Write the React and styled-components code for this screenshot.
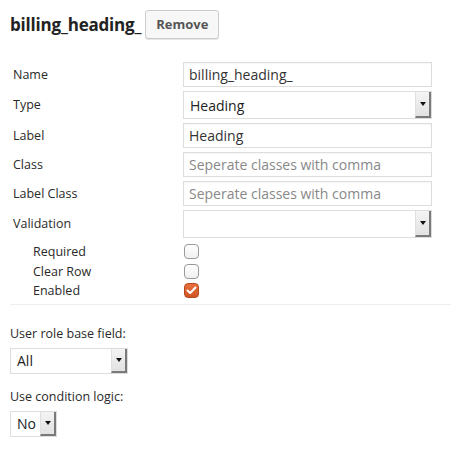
import React from "react"
import styled, {createGlobalStyle} from "styled-components"

const GlobalStyle = createGlobalStyle`
    body {
        margin: 0;
        background: #fff;
        font-family: "Open Sans", "Noto Sans", sans-serif;
        color: #333;
    }
`

const Wrapper = styled.div`
    padding: 9px 0 0 10px;
`

const Header = styled.div`
    display: flex;
    align-items: center;
    gap: 4px;
    height: 30px;
`

const Title = styled.h3`
    margin: 0;
    font-size: 17px;
    font-weight: 700;
    color: #222;
    letter-spacing: -0.2px;
`

const Button = styled.button`
    height: 29px;
    padding: 0 10px;
    border: 1px solid #ccc;
    border-radius: 3px;
    background: #f7f7f7;
    box-shadow: 0 1px 0 #e6e6e6;
    font-family: inherit;
    font-size: 13px;
    font-weight: 700;
    color: #555;
`

const Fields = styled.div`
    display: grid;
    grid-template-columns: 173px 249px;
    row-gap: 4px;
    margin-top: 23px;
    align-items: center;
`

const Label = styled.div`
    padding-left: ${props => props.$indent ? 23 : 3}px;
    font-size: 12.5px;
    color: #2a2a2a;
    line-height: 19.5px;
`

const Input = styled.div`
    box-sizing: border-box;
    height: 25px;
    border: 1px solid #ddd;
    padding: 0 5px;
    display: flex;
    align-items: center;
    font-size: 14px;
    color: ${props => props.$placeholder ? "#888" : "#333"};
    box-shadow: inset 0 1px 2px rgba(0, 0, 0, 0.04);
`

const SelectBox = styled.div`
    box-sizing: border-box;
    display: flex;
    align-items: stretch;
    width: ${props => props.$width || "100%"};
    height: ${props => props.$height || 28}px;
    border: 1px solid #ddd;
    background: #fff;
    font-size: 14px;
    color: #222;
`

const SelectText = styled.div`
    flex: 1;
    display: flex;
    align-items: center;
    padding-left: 6px;
`

const Arrow = styled.div`
    width: 13px;
    display: flex;
    align-items: center;
    justify-content: center;
    background: linear-gradient(#f4f4f4, #e2e2e2);
    border-left: 1px solid #e0e0e0;
    border-right: 2px solid #7a7a7a;
    border-bottom: 2px solid #7a7a7a;
    &::after {
        content: "";
        border-left: 3px solid transparent;
        border-right: 3px solid transparent;
        border-top: 4px solid #111;
    }
`

const Checks = styled.div`
    display: grid;
    grid-template-columns: 174px 1fr;
    grid-auto-rows: 19.5px;
    margin-top: 4px;
    align-items: center;
`

const Box = styled.span`
    box-sizing: border-box;
    width: 15px;
    height: 15px;
    border-radius: 4px;
    border: 1px solid ${props => props.$checked ? "#b5481c" : "#999"};
    background: ${props => props.$checked ? "linear-gradient(#e8703e, #cf5525)" : "linear-gradient(#fff, #f0f0f0)"};
    display: flex;
    align-items: center;
    justify-content: center;
`

const Divider = styled.hr`
    margin: 3px 0 0 0;
    border: 0;
    border-top: 1px solid #eee;
`

const Section = styled.div`
    margin-top: ${props => props.$top}px;
`

const Caption = styled.div`
    font-size: 12.5px;
    color: #2a2a2a;
    margin-bottom: 6px;
`

const Select = ({value, width, height}) => (
    <SelectBox $width={width} $height={height}>
        <SelectText>{value}</SelectText>
        <Arrow/>
    </SelectBox>
)

const Check = ({label, checked}) => (
    <>
        <Label $indent>{label}</Label>
        <Box $checked={checked}>
            {checked && (
                <svg width="11" height="9" viewBox="0 0 11 9">
                    <path d="M1.5 4.5 L4.2 7 L9.5 1.5" fill="none" stroke="#fff" strokeWidth="2"
                          strokeLinecap="round" strokeLinejoin="round"/>
                </svg>
            )}
        </Box>
    </>
)

export default function App() {
    return (
        <Wrapper>
            <GlobalStyle/>
            <Header>
                <Title>billing_heading_</Title>
                <Button>Remove</Button>
            </Header>
            <Fields>
                <Label>Name</Label>
                <Input>billing_heading_</Input>
                <Label>Type</Label>
                <Select value="Heading"/>
                <Label>Label</Label>
                <Input>Heading</Input>
                <Label>Class</Label>
                <Input $placeholder>Seperate classes with comma</Input>
                <Label>Label Class</Label>
                <Input $placeholder>Seperate classes with comma</Input>
                <Label>Validation</Label>
                <Select value=""/>
            </Fields>
            <Checks>
                <Check label="Required"/>
                <Check label="Clear Row"/>
                <Check label="Enabled" checked/>
            </Checks>
            <Divider/>
            <Section $top={20}>
                <Caption>User role base field:</Caption>
                <Select value="All" width="118px" height={26}/>
            </Section>
            <Section $top={14}>
                <Caption>Use condition logic:</Caption>
                <Select value="No" width="47px" height={26}/>
            </Section>
        </Wrapper>
    )
}
